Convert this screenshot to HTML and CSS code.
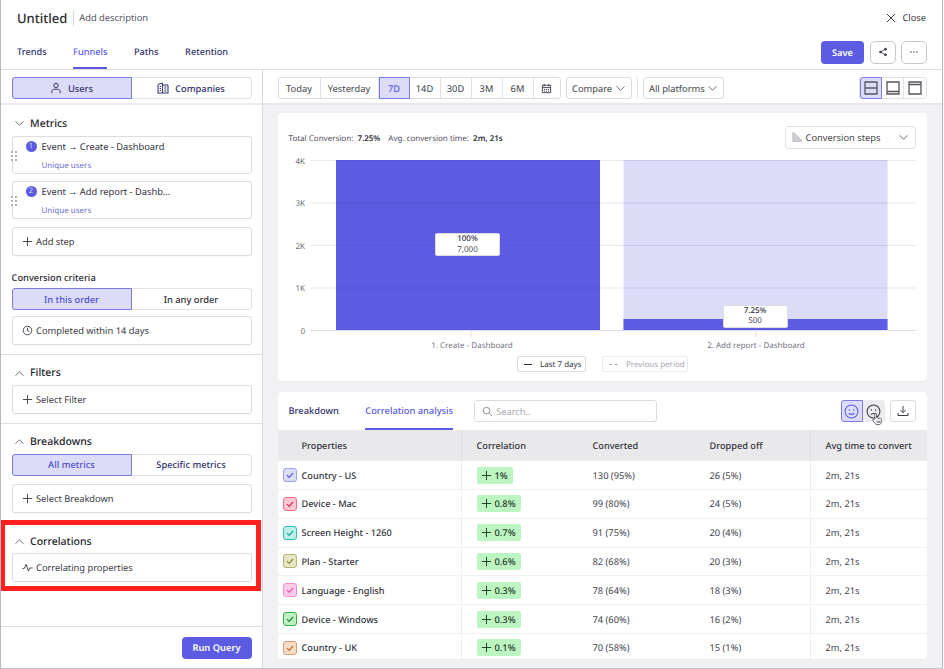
FILE: index.html
```html
<!DOCTYPE html>
<html lang="en">
<head>
<meta charset="utf-8">
<title>Untitled funnel</title>
<link rel="stylesheet" href="styles.css">
</head>
<body>
<div class="app">
  <header class="top">
    <div class="title-row">
      <h1 class="title">Untitled</h1>
      <span class="desc">Add description</span>
      <span class="close"><svg class="ic" viewBox="0 0 12 12"><path d="M2 2l8 8M10 2l-8 8"/></svg>Close</span>
    </div>
    <div class="tab-row">
      <nav class="tabs">
        <a class="tab">Trends</a>
        <a class="tab on">Funnels</a>
        <a class="tab">Paths</a>
        <a class="tab">Retention</a>
      </nav>
      <div class="actions">
        <button class="save">Save</button>
        <button class="square"><svg class="ic" viewBox="0 0 12 12"><path d="M9 2.6L3 6l6 3.4"/><circle class="solid" cx="9" cy="2.6" r="1.6"/><circle class="solid" cx="3" cy="6" r="1.6"/><circle class="solid" cx="9" cy="9.4" r="1.6"/></svg></button>
        <button class="square"><svg class="ic" viewBox="0 0 12 12"><circle class="solid" cx="2.5" cy="6" r=".9"/><circle class="solid" cx="6" cy="6" r=".9"/><circle class="solid" cx="9.5" cy="6" r=".9"/></svg></button>
      </div>
    </div>
  </header>

  <div class="main">
    <aside class="side">
      <div class="account">
        <div class="seg">
          <span class="seg-item on"><svg class="ic" viewBox="0 0 12 12"><circle cx="6" cy="3.4" r="2.2"/><path d="M1.8 11.2V9.6c0-1.4 1.2-2.4 2.6-2.4h3.2c1.4 0 2.6 1 2.6 2.4v1.6"/></svg>Users</span>
          <span class="seg-item"><svg class="ic" viewBox="0 0 12 12"><path d="M1 11V2.5L5.6 1v10M5.6 3H11v8M.5 11h11M2.6 4.5h1.4M2.6 6.5h1.4M2.6 8.5h1.4M7.4 5h2M7.4 7h2M7.4 9h2"/></svg>Companies</span>
        </div>
      </div>

      <section class="sec metrics">
        <h2 class="sec-head"><svg class="chev" viewBox="0 0 12 8"><path d="M1.5 1.5L6 6l4.5-4.5"/></svg>Metrics</h2>
        <div class="step">
          <svg class="grip" viewBox="0 0 6 10"><circle cx="1" cy="1" r=".8"/><circle cx="5" cy="1" r=".8"/><circle cx="1" cy="5" r=".8"/><circle cx="5" cy="5" r=".8"/><circle cx="1" cy="9" r=".8"/><circle cx="5" cy="9" r=".8"/></svg>
          <div class="step-line"><span class="num">1</span>Event → Create - Dashboard</div>
          <div class="step-sub">Unique users</div>
        </div>
        <div class="step">
          <svg class="grip" viewBox="0 0 6 10"><circle cx="1" cy="1" r=".8"/><circle cx="5" cy="1" r=".8"/><circle cx="1" cy="5" r=".8"/><circle cx="5" cy="5" r=".8"/><circle cx="1" cy="9" r=".8"/><circle cx="5" cy="9" r=".8"/></svg>
          <div class="step-line"><span class="num">2</span>Event → Add report - Dashb...</div>
          <div class="step-sub">Unique users</div>
        </div>
        <div class="field"><svg class="ic" viewBox="0 0 12 12"><path d="M6 1v10M1 6h10"/></svg>Add step</div>
        <h3 class="label">Conversion criteria</h3>
        <div class="seg seg-plain">
          <span class="seg-item on">In this order</span>
          <span class="seg-item dark">In any order</span>
        </div>
        <div class="field"><svg class="ic" viewBox="0 0 12 12"><circle cx="6" cy="6" r="4.7"/><path d="M6 3v3.2l2.2 1"/></svg>Completed within 14 days</div>
      </section>

      <section class="sec filters">
        <h2 class="sec-head"><svg class="chev" viewBox="0 0 12 8"><path d="M1.5 6.5L6 2l4.5 4.5"/></svg>Filters</h2>
        <div class="field"><svg class="ic" viewBox="0 0 12 12"><path d="M6 1v10M1 6h10"/></svg>Select Filter</div>
      </section>

      <section class="sec breakdowns">
        <h2 class="sec-head"><svg class="chev" viewBox="0 0 12 8"><path d="M1.5 6.5L6 2l4.5 4.5"/></svg>Breakdowns</h2>
        <div class="seg">
          <span class="seg-item on">All metrics</span>
          <span class="seg-item">Specific metrics</span>
        </div>
        <div class="field"><svg class="ic" viewBox="0 0 12 12"><path d="M6 1v10M1 6h10"/></svg>Select Breakdown</div>
      </section>

      <section class="sec correlations">
        <h2 class="sec-head"><svg class="chev" viewBox="0 0 12 8"><path d="M1.5 6.5L6 2l4.5 4.5"/></svg>Correlations</h2>
        <div class="field"><svg class="ic" viewBox="0 0 12 12"><path d="M.5 7h2L4.5 2.5 7 10l1.5-3.5h3"/></svg>Correlating properties</div>
        <div class="callout"></div>
      </section>

      <div class="side-space"></div>
      <footer class="side-foot"><button class="run">Run Query</button></footer>
    </aside>

    <div class="content">
      <div class="toolbar">
        <div class="dates">
          <span class="date">Today</span>
          <span class="date w-y">Yesterday</span>
          <span class="date on">7D</span>
          <span class="date">14D</span>
          <span class="date">30D</span>
          <span class="date">3M</span>
          <span class="date">6M</span>
          <span class="date"><svg class="ic cal" viewBox="0 0 12 12"><path d="M1.5 2.5h9v8h-9zM1.5 5h9M3.5 1v2.5M8.5 1v2.5"/><path d="M3.2 7h1.2M5.4 7h1.2M7.6 7h1.2M3.2 8.8h1.2M5.4 8.8h1.2M7.6 8.8h1.2"/></svg></span>
        </div>
        <span class="drop compare">Compare<svg class="chev" viewBox="0 0 12 8"><path d="M1.5 1.5L6 6l4.5-4.5"/></svg></span>
        <span class="vsep"></span>
        <span class="drop platforms">All platforms<svg class="chev" viewBox="0 0 12 8"><path d="M1.5 1.5L6 6l4.5-4.5"/></svg></span>
        <div class="views">
          <span class="view on"><svg viewBox="0 0 14 14"><path d="M1 1h12v12H1zM1 7h12"/></svg></span>
          <span class="view"><svg viewBox="0 0 14 14"><path d="M1 1h12v12H1zM1 10.5h12"/></svg></span>
          <span class="view"><svg viewBox="0 0 14 14"><path d="M1 1h12v12H1zM1 3.5h12"/></svg></span>
        </div>
      </div>

      <div class="panels">
        <section class="card chart-card">
          <div class="chart-head">
            <p class="stats">Total Conversion: <b>7.25%</b><span class="gap"></span>Avg. conversion time: <b>2m, 21s</b></p>
            <span class="drop steps"><svg class="bars-ic" viewBox="0 0 12 12"><path d="M1 .5V11.5h10.5V9.5L9 8.5V7L7 6V5L5 4 3 1.5 1 .5z"/></svg>Conversion steps<svg class="chev" viewBox="0 0 12 8"><path d="M1.5 1.5L6 6l4.5-4.5"/></svg></span>
          </div>
          <div class="plot">
            <svg class="plot-svg" viewBox="0 0 649 220">
              <rect class="bar-ghost" x="345.5" y="0" width="264" height="170"/>
              <rect class="bar" x="58" y="0" width="264" height="170"/>
              <rect class="bar" x="345.5" y="159" width="264" height="11"/>
              <path class="grid" d="M32 0.5h606M32 43h606M32 85.5h606M32 128h606"/>
              <path class="axis" d="M32 170.5h606M193 170v7M478 170v7"/>
              <text class="tick" x="27" y="3.5">4K</text>
              <text class="tick" x="27" y="46">3K</text>
              <text class="tick" x="27" y="88.5">2K</text>
              <text class="tick" x="27" y="131">1K</text>
              <text class="tick" x="27" y="173.5">0</text>
              <text class="cat" x="194" y="187.5">1. Create - Dashboard</text>
              <text class="cat" x="478" y="187.5">2. Add report - Dashboard</text>
            </svg>
            <div class="tip tip-a"><b>100%</b><span>7,000</span></div>
            <div class="tip tip-b"><b>7.25%</b><span>500</span></div>
            <div class="legend">
              <span class="leg"><i class="dash"></i>Last 7 days</span>
              <span class="leg off"><i class="dash dashed"></i>Previous period</span>
            </div>
          </div>
        </section>

        <section class="card table-card">
          <div class="table-top">
            <a class="ttab">Breakdown</a>
            <a class="ttab on">Correlation analysis</a>
            <span class="search"><svg class="ic" viewBox="0 0 12 12"><circle cx="5" cy="5" r="3.6"/><path d="M7.8 7.8L11 11"/></svg>Search..</span>
            <div class="mood">
              <span class="mood-btn on"><svg class="ic" viewBox="0 0 14 14"><circle cx="7" cy="7" r="6"/><circle class="solid" cx="5" cy="5.6" r=".7"/><circle class="solid" cx="9" cy="5.6" r=".7"/><path d="M4.5 8.5c1.2 1.6 3.8 1.6 5 0"/></svg></span>
              <span class="mood-btn hover"><svg class="ic" viewBox="0 0 14 14"><circle cx="7" cy="7" r="6"/><circle class="solid" cx="5" cy="5.6" r=".7"/><circle class="solid" cx="9" cy="5.6" r=".7"/><path d="M4.5 10c1.2-1.6 3.8-1.6 5 0"/></svg></span>
              <svg class="cursor" viewBox="0 0 14 16"><path d="M4.5 8V2.3c0-1.3 2-1.3 2 0V6.5l4 .8c1.3.3 2 1 1.8 2.3l-.6 3c-.2 1-1 1.9-2.2 1.9H7c-.9 0-1.5-.4-2-1.1L2.2 10c-.8-1.3.8-2.5 1.8-1.4z"/><path class="line" d="M7 10v2.5M8.6 10v2.5M10.2 10v2.5"/></svg>
            </div>
            <button class="dl"><svg class="ic" viewBox="0 0 12 12"><path d="M6 1v6.500M3.500 5.200L6 7.700l2.500-2.500M1 8v2.500h10V8"/></svg></button>
          </div>
          <div class="tbl">
            <div class="row head">
              <div class="cell first no-check">Properties</div>
              <div class="cell sep">Correlation</div>
              <div class="cell">Converted</div>
              <div class="cell">Dropped off</div>
              <div class="cell sep">Avg time to convert</div>
            </div>
            <div class="row">
              <div class="cell first"><span class="chk c-purple"><svg viewBox="0 0 10 10"><path d="M2 5.2l2.2 2.2L8 3"/></svg></span>Country - US</div>
              <div class="cell sep"><span class="pill"><svg viewBox="0 0 12 12"><path d="M6 1v10M1 6h10"/></svg>1%</span></div>
              <div class="cell">130 (95%)</div><div class="cell">26 (5%)</div><div class="cell sep">2m, 21s</div>
            </div>
            <div class="row">
              <div class="cell first"><span class="chk c-red"><svg viewBox="0 0 10 10"><path d="M2 5.2l2.2 2.2L8 3"/></svg></span>Device - Mac</div>
              <div class="cell sep"><span class="pill"><svg viewBox="0 0 12 12"><path d="M6 1v10M1 6h10"/></svg>0.8%</span></div>
              <div class="cell">99 (80%)</div><div class="cell">24 (5%)</div><div class="cell sep">2m, 21s</div>
            </div>
            <div class="row">
              <div class="cell first"><span class="chk c-teal"><svg viewBox="0 0 10 10"><path d="M2 5.2l2.2 2.2L8 3"/></svg></span>Screen Height - 1260</div>
              <div class="cell sep"><span class="pill"><svg viewBox="0 0 12 12"><path d="M6 1v10M1 6h10"/></svg>0.7%</span></div>
              <div class="cell">91 (75%)</div><div class="cell">20 (4%)</div><div class="cell sep">2m, 21s</div>
            </div>
            <div class="row">
              <div class="cell first"><span class="chk c-olive"><svg viewBox="0 0 10 10"><path d="M2 5.2l2.2 2.2L8 3"/></svg></span>Plan - Starter</div>
              <div class="cell sep"><span class="pill"><svg viewBox="0 0 12 12"><path d="M6 1v10M1 6h10"/></svg>0.6%</span></div>
              <div class="cell">82 (68%)</div><div class="cell">20 (3%)</div><div class="cell sep">2m, 21s</div>
            </div>
            <div class="row">
              <div class="cell first"><span class="chk c-pink"><svg viewBox="0 0 10 10"><path d="M2 5.2l2.2 2.2L8 3"/></svg></span>Language - English</div>
              <div class="cell sep"><span class="pill"><svg viewBox="0 0 12 12"><path d="M6 1v10M1 6h10"/></svg>0.3%</span></div>
              <div class="cell">78 (64%)</div><div class="cell">18 (3%)</div><div class="cell sep">2m, 21s</div>
            </div>
            <div class="row">
              <div class="cell first"><span class="chk c-green"><svg viewBox="0 0 10 10"><path d="M2 5.2l2.2 2.2L8 3"/></svg></span>Device - Windows</div>
              <div class="cell sep"><span class="pill"><svg viewBox="0 0 12 12"><path d="M6 1v10M1 6h10"/></svg>0.3%</span></div>
              <div class="cell">74 (60%)</div><div class="cell">16 (2%)</div><div class="cell sep">2m, 21s</div>
            </div>
            <div class="row">
              <div class="cell first"><span class="chk c-orange"><svg viewBox="0 0 10 10"><path d="M2 5.2l2.2 2.2L8 3"/></svg></span>Country - UK</div>
              <div class="cell sep"><span class="pill"><svg viewBox="0 0 12 12"><path d="M6 1v10M1 6h10"/></svg>0.1%</span></div>
              <div class="cell">70 (58%)</div><div class="cell">15 (1%)</div><div class="cell sep">2m, 21s</div>
            </div>
          </div>
        </section>
      </div>
    </div>
  </div>
</div>
</body>
</html>
```
FILE: styles.css
```css
* { box-sizing: border-box; }
html, body { margin: 0; padding: 0; background: #fff; }
body { font-family: "Noto Sans", "Open Sans", sans-serif; font-size: 9.3px; color: #2e2e38; text-rendering: geometricPrecision; }
button { font-family: inherit; cursor: pointer; text-rendering: geometricPrecision; }
h1, h2, h3, p { margin: 0; }

.app { width: 943px; height: 669px; border-left: 1.5px solid #b9b9bd; border-right: 1.5px solid #b9b9bd; border-bottom: 1.5px solid #c4c4c8; display: flex; flex-direction: column; overflow: hidden; }

.ic { width: 12px; height: 12px; fill: none; stroke: #3c3c46; stroke-width: 1; flex: none; }
.ic .solid { fill: #3c3c46; stroke: none; }
.chev { width: 11px; height: 7px; fill: none; stroke: #55555f; stroke-width: 1; flex: none; }

/* Header */
.top { height: 70px; flex: none; border-bottom: 1px solid #dedee2; display: flex; flex-direction: column; }
.title-row { display: flex; align-items: center; height: 35px; padding-left: 16px; padding-right: 16px; }
.title { font-size: 13px; font-weight: 500; color: #2b2b33; padding-right: 6px; border-right: 1px solid #d5d5da; line-height: 16px; }
.desc { font-size: 9.3px; color: #55555f; margin-left: 5px; }
.close { margin-left: auto; display: flex; align-items: center; gap: 5px; font-size: 9.3px; color: #3c3c46; }
.tab-row { display: flex; justify-content: space-between; height: 34px; padding-left: 16px; padding-right: 15px; }
.tabs { display: flex; gap: 26.5px; }
.tab { height: 34px; line-height: 33px; font-size: 9.2px; font-weight: 500; color: #32326e; border-bottom: 2px solid transparent; }
.tab.on { color: #5b5ce2; border-bottom-color: #5b5ce2; }
.actions { display: flex; gap: 5.5px; padding-top: 6px; align-items: flex-start; }
.save { width: 43px; height: 22.5px; border: 0; border-radius: 4px; background: #5b5ce2; color: #fff; font-size: 9.3px; font-weight: 600; }
.square { width: 26px; height: 22.5px; padding: 0; border: 1px solid #c6c6cb; border-radius: 5px; background: #fff; display: flex; align-items: center; justify-content: center; }
.square .ic { width: 10px; height: 10px; }

/* Layout */
.main { flex: 1; display: flex; min-height: 0; }
.side { width: 261.5px; flex: none; border-right: 1px solid #d9d9dd; display: flex; flex-direction: column; }
.account { height: 35px; padding: 7px 10px 0 10.5px; border-bottom: 2px solid #ececef; }

.seg { display: grid; grid-template-columns: 119px 1fr; height: 22px; border: 1px solid #e1e1e5; border-radius: 3px; }
.seg-item { display: flex; align-items: center; justify-content: center; gap: 6px; margin: -1px 0; font-size: 9.3px; font-weight: 500; color: #32326e; }
.seg-item.on { margin-left: -1px; background: #dcdcf8; border: 1px solid #7a7be8; border-radius: 3px 0 0 3px; color: #4e4fd0; }
.seg-item.dark { color: #2e2e38; }
.account .seg-item.on { color: #32326e; }
.seg-item .ic { stroke: #32326e; }

.sec { padding: 10.5px 10px 10px 10.5px; border-bottom: 1px solid #dfdfe3; position: relative; }
.sec-head { display: flex; align-items: center; gap: 5.5px; height: 16px; font-size: 10.5px; font-weight: 500; color: #24242c; padding-left: 2px; margin-bottom: 4px; }
.field { display: flex; align-items: center; gap: 3.5px; height: 28.5px; padding-left: 9px; border: 1px solid #dcdce0; border-radius: 3px; font-size: 9.3px; color: #3a3a44; box-shadow: 0 1px 1px rgba(0, 0, 0, 0.03); }
.field .ic { width: 11px; height: 11px; }

.metrics { padding-bottom: 9.5px; }
.filters { padding-top: 10px; padding-bottom: 9px; }
.step { position: relative; height: 38px; margin-bottom: 7.5px; padding: 3px 0 0 13px; border: 1px solid #dcdce0; border-radius: 3px; }
.step + .field { margin-top: 8px; }
.grip { position: absolute; left: -2px; top: 14px; width: 6px; height: 10px; fill: #4d4d57; background: #fff; }
.step-line { display: flex; align-items: center; gap: 5px; font-size: 9.3px; color: #30303a; line-height: 13px; }
.num { width: 11px; height: 11px; border-radius: 50%; background: #5b5ce2; color: #dcdcf8; font-size: 7.5px; line-height: 11px; text-align: center; flex: none; }
.step-sub { margin: 7px 0 0 16px; font-size: 8px; line-height: 11px; color: #6c6dd8; }
.label { font-size: 9.3px; font-weight: 500; color: #2a2a33; margin: 15px 0 4.5px; line-height: 13px; }
.metrics .seg { margin-bottom: 6px; }

.breakdowns { height: 96px; padding-top: 10px; border-bottom: 0; }
.breakdowns .seg { margin-bottom: 8.5px; }
.correlations { height: 71px; padding-top: 14px; }
.correlations .sec-head { margin-bottom: 3.5px; }
.callout { position: absolute; left: -1.5px; top: 0; width: 261px; height: 71px; border: 5px solid #ff2020; pointer-events: none; }
.side-space { flex: 1; }
.side-foot { height: 42px; flex: none; border-top: 1px solid #dfdfe3; display: flex; justify-content: flex-end; align-items: flex-start; padding: 9.5px 10px 0 0; }
.run { width: 70px; height: 22px; border: 0; border-radius: 4px; background: #5b5ce2; color: #fff; font-size: 9.3px; font-weight: 600; }

/* Content */
.content { flex: 1; min-width: 0; display: flex; flex-direction: column; background: #f1f1f3; }
.toolbar { height: 35px; flex: none; background: #fff; display: flex; align-items: flex-start; padding: 7px 15px 0 15px; border-bottom: 2px solid #e7e7ea; }
.dates { display: flex; height: 22px; border: 1px solid #dcdce0; border-radius: 3px; }
.date { display: flex; align-items: center; justify-content: center; width: 31px; border-right: 1px solid #e1e1e5; font-size: 9.3px; color: #44444e; }
.date:first-child { width: 42px; }
.date.w-y { width: 58px; }
.date:last-child { width: 26px; border-right: 0; }
.date.on { margin: -1px 0; height: 22px; background: #dcdcf8; border: 1px solid #7a7be8; color: #5b5ce2; font-weight: 500; }
.cal { width: 11px; height: 11px; }
.drop { display: flex; align-items: center; justify-content: space-between; height: 22px; padding: 0 5px; border: 1px solid #dcdce0; border-radius: 3px; font-size: 9.3px; color: #44444e; }
.compare { width: 66px; margin-left: 5.5px; }
.vsep { width: 1px; height: 22px; margin: 0 5px; background: #e5e5e9; }
.platforms { width: 81px; }
.views { display: flex; margin-left: auto; height: 22px; border: 1px solid #e1e1e5; border-radius: 3px; }
.view { width: 22px; display: flex; align-items: center; justify-content: center; border-right: 1px solid #e5e5e9; margin: -1px 0; }
.view:last-child { border-right: 0; }
.view svg { width: 14px; height: 14px; fill: none; stroke: #55555f; stroke-width: 1.3; }
.view.on { background: #dcdcf8; border: 1px solid #7a7be8; border-radius: 3px 0 0 3px; }

.panels { flex: 1; min-height: 0; display: flex; flex-direction: column; gap: 11px; padding: 8px 15px 9px; }
.card { background: #fff; border-radius: 4px; box-shadow: 0 1px 1px rgba(0, 0, 0, 0.03); }
.chart-card { height: 268px; flex: none; }
.chart-head { height: 46.5px; display: flex; justify-content: space-between; align-items: flex-start; padding: 12.5px 11px 0 11px; }
.stats { font-size: 8px; color: #50505a; padding-top: 7.5px; line-height: 11px; }
.stats b { font-weight: 600; color: #2e2e38; margin-left: 2px; }
.gap { display: inline-block; width: 8px; }
.steps { width: 131px; height: 23px; padding: 0 6px; justify-content: flex-start; gap: 2.5px; border-color: #e1e1e5; }
.steps .chev { margin-left: auto; }
.bars-ic { width: 10px; height: 10px; fill: #cfcfd4; stroke: #a5a5ad; stroke-width: .7; margin-right: 1px; }

.plot { position: relative; height: 221.5px; }
.plot-svg { display: block; width: 649px; height: 220px; overflow: visible; }
.bar { fill: #5b5ce2; }
.bar-ghost { fill: #dcdcf8; }
.grid { stroke: #2e2e78; stroke-opacity: .11; fill: none; }
.axis { stroke: #dedee2; fill: none; }
.tick { font-family: "Noto Sans", sans-serif; font-size: 8px; fill: #6a6a74; text-anchor: end; }
.cat { font-family: "Noto Sans", sans-serif; font-size: 8px; fill: #74747e; text-anchor: middle; }
.tip { position: absolute; width: 65px; height: 23px; display: flex; flex-direction: column; align-items: center; justify-content: center; background: #fff; border: 1px solid #dcdce0; border-radius: 2px; font-size: 8px; line-height: 10.5px; color: #4a4a54; }
.tip b { font-weight: 500; color: #2e2e38; }
.tip-a { left: 157.5px; top: 73.5px; }
.tip-b { left: 445px; top: 145px; }
.legend { position: absolute; left: 239px; top: 196.5px; display: flex; gap: 16px; }
.leg { display: flex; align-items: center; gap: 8px; width: 69px; height: 16px; padding: 0 0 0 6.5px; border: 1px solid #dcdce0; border-radius: 2px; font-size: 8px; color: #33333c; }
.leg.off { width: 86px; color: #a6a6ae; border-color: #ebebee; }
.dash { display: block; width: 8px; height: 0; border-top: 1.5px solid #2e2e38; flex: none; }
.dashed { width: 9px; border-top: 1.5px dashed #a6a6ae; }

.table-card { flex: 1; min-height: 0; overflow: hidden; display: flex; flex-direction: column; }
.table-top { height: 38px; flex: none; display: flex; align-items: flex-start; padding-left: 11px; padding-right: 11px; }
.ttab { height: 38px; line-height: 38px; font-size: 9.3px; font-weight: 500; color: #32326e; }
.ttab.on { margin-left: 26.5px; color: #5b5ce2; border-bottom: 2px solid #5b5ce2; }
.search { display: flex; align-items: center; gap: 3px; width: 183px; height: 22px; margin: 8px 0 0 21px; padding-left: 7px; border: 1px solid #dcdce0; border-radius: 3px; font-size: 9.3px; color: #a8a8b0; }
.search .ic { width: 11px; height: 11px; stroke: #85858f; }
.mood { position: relative; display: flex; margin: 8px 0 0 auto; }
.mood-btn { width: 22px; height: 22px; display: flex; align-items: center; justify-content: center; }
.mood-btn .ic { width: 15px; height: 15px; }
.mood-btn.on { background: #dcdcf8; border: 1px solid #7a7be8; border-radius: 3px 0 0 3px; }
.mood-btn.on .ic { stroke: #5b5ce2; }
.mood-btn.on .solid { fill: #5b5ce2; }
.mood-btn.hover { background: #ececee; border-radius: 0 3px 3px 0; }
.cursor { position: absolute; left: 30px; top: 12px; width: 12px; height: 14px; fill: #fff; stroke: #3c3c46; stroke-width: .9; }
.cursor .line { fill: none; }
.dl { width: 26px; height: 22px; margin: 8px 0 0 5.5px; padding: 0; border: 1px solid #dcdce0; border-radius: 3px; background: #fff; display: flex; align-items: center; justify-content: center; }

.tbl { flex: 1; min-height: 0; overflow: hidden; }
.row { display: grid; grid-template-columns: 183.5px 116px 117px 116px 1fr; height: 28.8px; border-bottom: 1px solid #f0f0f2; }
.row.head { height: 31.2px; background: #e9e9ec; border-bottom: 0; color: #33333c; }
.cell { display: flex; align-items: center; padding-left: 15.5px; font-size: 9.3px; color: #44444e; }
.head .cell { color: #33333c; font-weight: 500; font-size: 9.2px; }
.cell.sep { padding-left: 14.5px; border-left: 1px solid #eeeef0; }
.head .cell.sep { border-left: 1px solid #dcdce0; }
.cell.first { padding-left: 5px; gap: 5px; color: #33333c; font-weight: 500; font-size: 9.2px; }
.cell.no-check { padding-left: 24px; }
.chk { width: 14px; height: 14px; flex: none; border: 1px solid; border-radius: 3px; display: flex; align-items: center; justify-content: center; }
.chk svg { width: 10px; height: 10px; fill: none; stroke-width: 1.2; stroke: currentColor; }
.c-purple { background: #dcdcf8; border-color: #9e9ff0; color: #5b5ce2; }
.c-red { background: #ffc5d2; border-color: #eb6f8c; color: #d92d5c; }
.c-teal { background: #bdeee8; border-color: #2dc4b5; color: #13a597; }
.c-olive { background: #e6e6c2; border-color: #b3b378; color: #8d8d3c; }
.c-pink { background: #ffcdea; border-color: #f58bcb; color: #ea4fae; }
.c-green { background: #bff0c2; border-color: #35ad4c; color: #15892e; }
.c-orange { background: #f7dcc8; border-color: #d99d73; color: #c96b2c; }
.pill { display: inline-flex; align-items: center; gap: 3px; height: 17px; padding: 0 5px 0 4px; border-radius: 2px; background: #bdf5c2; color: #1f3a26; font-weight: 500; font-size: 9.3px; }
.pill svg { width: 11px; height: 11px; fill: none; stroke: #17301d; stroke-width: 1; }
```
